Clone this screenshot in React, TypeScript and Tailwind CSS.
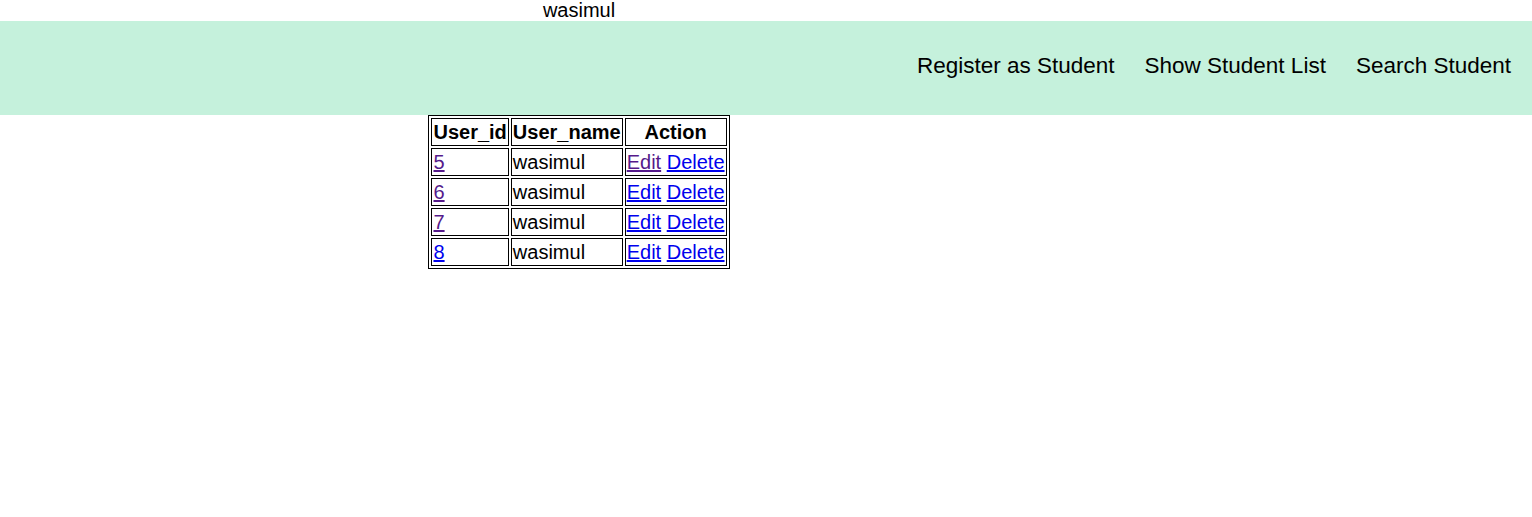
const rows = [
  { id: "5", idVisited: true, editVisited: true },
  { id: "6", idVisited: true, editVisited: false },
  { id: "7", idVisited: true, editVisited: false },
  { id: "8", idVisited: false, editVisited: false },
];

const linkCls = (visited: boolean) =>
  visited ? "text-[#551a8b] underline" : "text-[#0000ee] underline";

export default function App() {
  return (
    <div className="min-h-screen bg-white text-black font-['Liberation_Sans',Arial,sans-serif]">
      {/* logged-in user name */}
      <div className="w-[1158px] text-center text-[20px] leading-[21px]">wasimul</div>

      {/* nav bar */}
      <header className="h-[94px] bg-[#c5f1dc] flex items-center justify-end gap-[30px] pr-[21px] pb-[5px]">
        <a className="text-[22.5px] text-black">Register as Student</a>
        <a className="text-[22.5px] text-black">Show Student List</a>
        <a className="text-[22.5px] text-black">Search Student</a>
      </header>

      {/* student table */}
      <div className="w-[1158px] flex justify-center">
        <table className="border-separate border-spacing-[2px] border border-black text-[20px] leading-[24px]">
          <thead>
            <tr>
              <th className="border border-black p-[1px] font-bold">User_id</th>
              <th className="border border-black p-[1px] font-bold">User_name</th>
              <th className="border border-black p-[1px] font-bold">Action</th>
            </tr>
          </thead>
          <tbody>
            {rows.map((r) => (
              <tr key={r.id}>
                <td className="border border-black p-[1px]">
                  <a className={linkCls(r.idVisited)}>{r.id}</a>
                </td>
                <td className="border border-black p-[1px]">wasimul</td>
                <td className="border border-black p-[1px]">
                  <a className={linkCls(r.editVisited)}>Edit</a>{" "}
                  <a className={linkCls(false)}>Delete</a>
                </td>
              </tr>
            ))}
          </tbody>
        </table>
      </div>
    </div>
  );
}
